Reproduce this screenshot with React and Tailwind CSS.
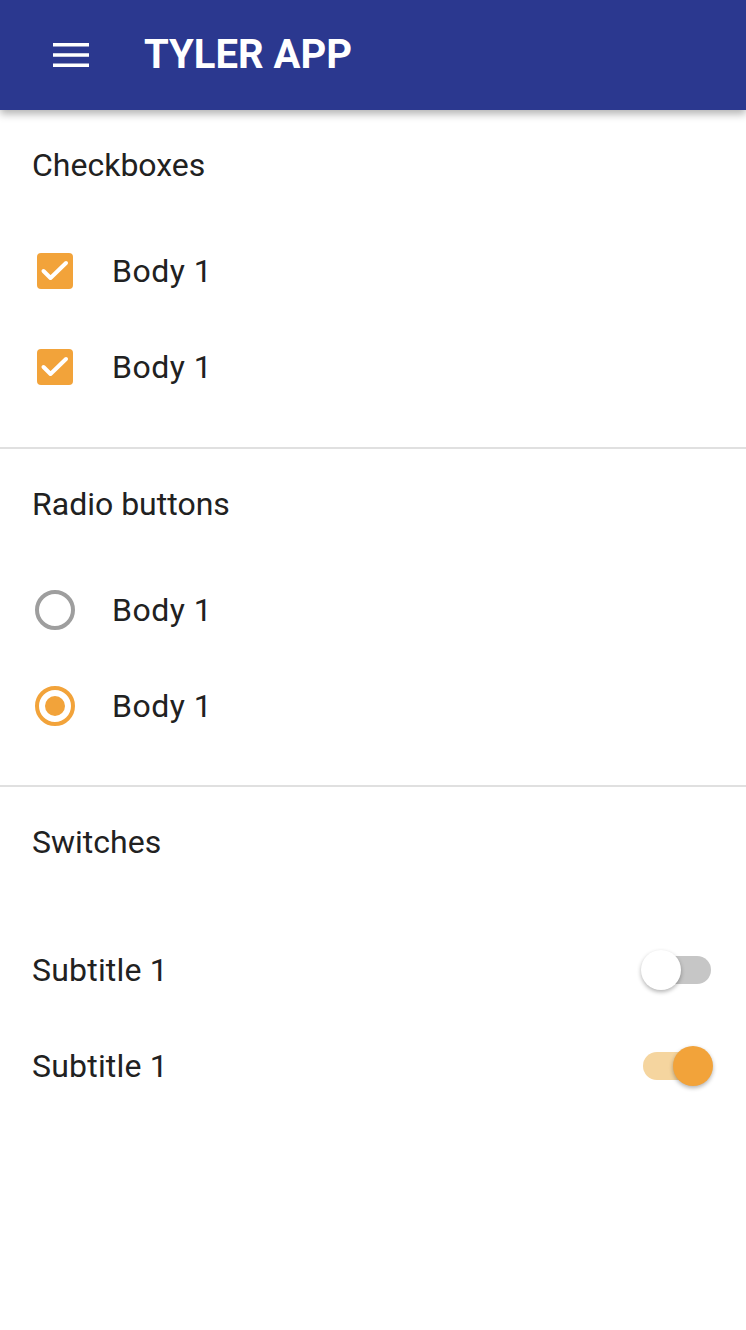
import React from "react";

const ORANGE = "bg-[#f2a33a]";

function CheckRow({ label }) {
    return (
        <div className="flex flex-row items-center h-[96px] pl-[37px]">
            <div className={`w-[36px] h-[36px] rounded-[4px] ${ORANGE}`}>
                <svg width="36" height="36" viewBox="0 0 36 36" fill="none">
                    <path d="M6.5 18l7 7L29 10" stroke="white" strokeWidth="4" strokeLinecap="round" strokeLinejoin="round" />
                </svg>
            </div>
            <span className="ml-[39px] text-[32px] tracking-[0.5px] text-[#212121]">{label}</span>
        </div>
    );
}

function RadioRow({ label, checked }) {
    return (
        <div className="flex flex-row items-center h-[96px] pl-[35px]">
            <div
                className={`w-[40px] h-[40px] rounded-full border-[4px] flex items-center justify-center ${
                    checked ? "border-[#f2a33a]" : "border-[#9e9e9e]"
                }`}
            >
                {checked && <div className={`w-[20px] h-[20px] rounded-full ${ORANGE}`} />}
            </div>
            <span className="ml-[37px] text-[32px] tracking-[0.5px] text-[#212121]">{label}</span>
        </div>
    );
}

function SwitchRow({ label, on }) {
    return (
        <div className="flex flex-row items-center justify-between h-[96px] pl-[32px] pr-[33px]">
            <span className="text-[32px] tracking-[0.2px] text-[#212121]">{label}</span>
            <div className="relative w-[72px] h-[40px] flex items-center">
                <div
                    className={`ml-[2px] w-[68px] h-[28px] rounded-full ${on ? "bg-[#f5d59f]" : "bg-[#c6c6c6]"}`}
                />
                <div
                    className={`absolute top-0 w-[40px] h-[40px] rounded-full shadow-[0_2px_4px_rgba(0,0,0,0.3)] ${
                        on ? "left-[32px] bg-[#f2a33a]" : "left-0 bg-white"
                    }`}
                />
            </div>
        </div>
    );
}

function Section({ title, children, tight }) {
    return (
        <div className="border-b-2 border-[#e0e0e0]">
            <div className="h-[110px] flex items-center pl-[32px]">
                <span className="text-[32px] text-[#212121]">{title}</span>
            </div>
            <div className={tight ? "pb-[31px] mt-[3px]" : "pb-[32px] mt-[3px]"}>{children}</div>
        </div>
    );
}

export default function App() {
    return (
        <div className="w-[746px] h-[1330px] bg-white font-['Roboto',sans-serif] overflow-hidden">
            <div className="relative z-10 h-[110px] bg-[#2b388f] flex flex-row items-center shadow-[0_4px_8px_rgba(0,0,0,0.3)]">
                <svg className="ml-[53px]" width="36" height="26" viewBox="0 0 36 26">
                    <rect x="0" y="1" width="36" height="3.5" fill="white" />
                    <rect x="0" y="11.25" width="36" height="3.5" fill="white" />
                    <rect x="0" y="21.5" width="36" height="3.5" fill="white" />
                </svg>
                <span className="ml-[55px] text-[40px] font-bold text-white">TYLER APP</span>
            </div>
            <Section title="Checkboxes">
                <CheckRow label="Body 1" />
                <CheckRow label="Body 1" />
            </Section>
            <Section title="Radio buttons" tight>
                <RadioRow label="Body 1" />
                <RadioRow label="Body 1" checked />
            </Section>
            <div>
                <div className="h-[110px] flex items-center pl-[32px]">
                    <span className="text-[32px] text-[#212121]">Switches</span>
                </div>
                <div className="pt-[25px]">
                    <SwitchRow label="Subtitle 1" />
                    <SwitchRow label="Subtitle 1" on />
                </div>
            </div>
        </div>
    );
}
